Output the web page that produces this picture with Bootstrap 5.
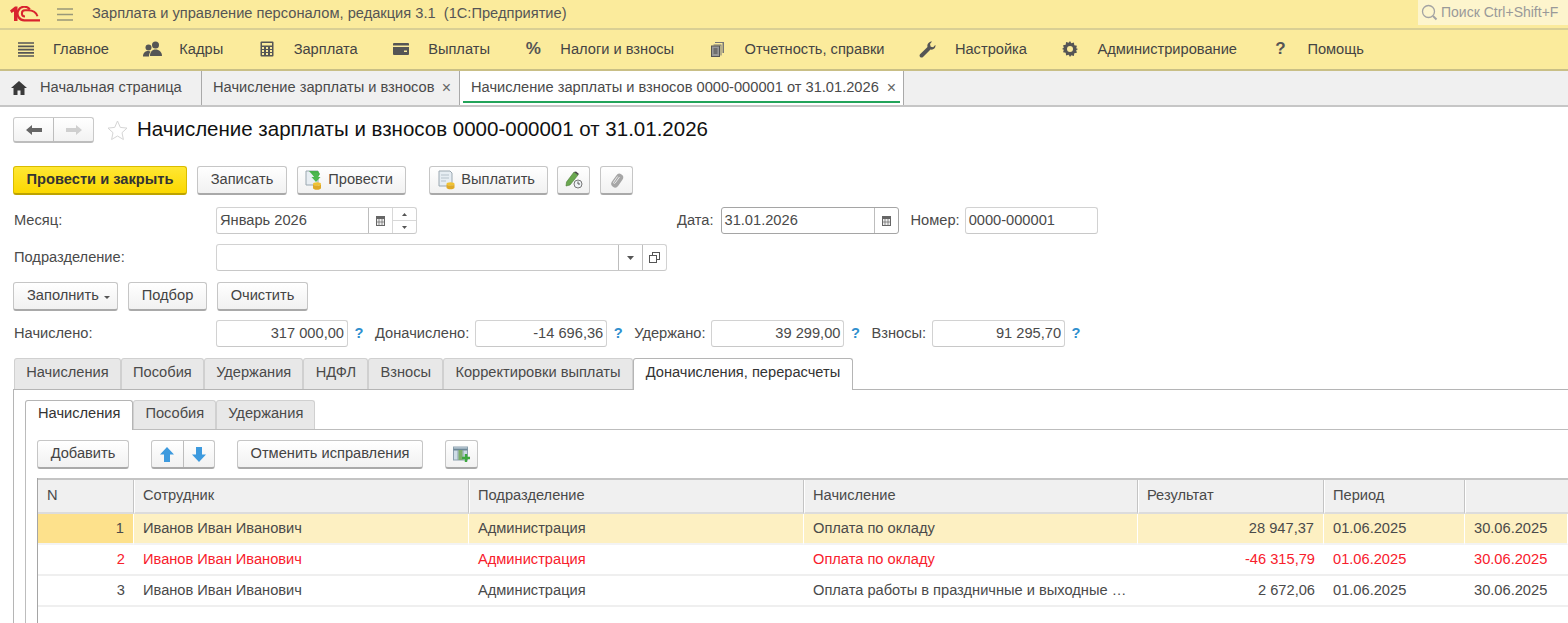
<!DOCTYPE html>
<html lang="ru">
<head>
  <meta charset="UTF-8" />
  <title>Начисление зарплаты и взносов</title>
  <link href="https://cdn.jsdelivr.net/npm/bootstrap@5.3.0/dist/css/bootstrap.min.css" rel="stylesheet" />
  <style>
    html, body { height: 623px; overflow: hidden; }
    body { font-family: "Liberation Sans", Arial, sans-serif; font-size: 14.65px; color: #4a4a4a; background: #fff; }
    svg { display: block; flex: none; }

    /* top yellow bars */
    .top-bar { height: 30px; background: #fbeb9c; border-bottom: 2px solid #d9cf94; }
    .app-logo { margin-left: 10px; margin-top: 0; }
    .burger { margin-left: 17px; margin-right: 19px; }
    .app-title { font-size: 14.65px; color: #555; white-space: pre; }
    .search-box { width: 150px; height: 26px; margin-top: -4px; background: #fdf5cd; color: #999; font-size: 14px; padding-left: 3px; gap: 3px; }
    .sect-bar { height: 41px; background: #fbeb9c; border-bottom: 2px solid #c9bf86; padding-left: 17px; gap: 34.4px; }
    .sect-item { display: flex; align-items: center; gap: 18px; color: #444; white-space: nowrap; }
    .sect-ico { width: 18px; display: flex; justify-content: center; color: #555; }
    .sect-mark { font-weight: 700; font-size: 17px; line-height: 18px; color: #555; }

    /* open windows */
    .win-tabs { height: 36px; background: #f0f0f0; border-bottom: 2px solid #c6c6c6; }
    .win-tab { height: 34px; display: flex; align-items: center; border-right: 1px solid #a9a9a9; color: #4a4a4a; white-space: nowrap; position: relative; }
    .win-home { width: 202px; padding-left: 11px; gap: 13px; }
    .win-doc { width: 258px; padding-left: 11px; justify-content: space-between; padding-right: 8px; }
    .win-cur { width: 444px; padding-left: 11px; padding-right: 7px; justify-content: space-between; background: #fff; }
    .win-cur::after { content: ""; position: absolute; left: 3px; right: 3px; bottom: 2px; height: 2px; background: #23a45a; }
    .win-close { color: #666; font-size: 16px; line-height: 14px; }

    /* form */
    .form-area { padding-left: 13px; }
    .head-row { height: 26px; margin-top: 10px; }
    .nav-pair { width: 81px; height: 26px; border: 1px solid #c9c9c9; border-bottom: 2px solid #bdbdbd; border-radius: 3px; background: linear-gradient(#fff, #f2f2f2); }
    .nav-pair > div { flex: 1; display: flex; align-items: center; justify-content: center; height: 100%; }
    .nav-pair > div:first-child { border-right: 1px solid #bdbdbd; }
    .star-ico { margin-left: 13px; margin-right: 9px; }
    .doc-title { font-size: 20.5px; color: #111; line-height: 26px; white-space: nowrap; margin: 0 0 2px; }

    .btn-1c { height: 29px; padding: 0; display: inline-flex; align-items: center; justify-content: center; gap: 5px; font-size: 14.65px; color: #444; background: linear-gradient(#fff, #f1f1f1); border: 1px solid #c6c6c6; border-bottom: 2px solid #a9a9a9; border-radius: 3px; white-space: nowrap; }
    .btn-main { background: linear-gradient(#ffe733, #fbd800); border-color: #d9bc00; border-bottom-color: #bda300; color: #333; font-weight: 700; }
    .btn-ico-text { justify-content: flex-end; padding-right: 12px; }
    .cmd-row { margin-top: 23px; }
    .w-post-close { width: 174px; margin-right: 10px; }
    .w-save { width: 90px; margin-right: 10px; }
    .w-post { width: 109px; margin-right: 23px; }
    .w-pay { width: 119px; margin-right: 9px; }
    .w-ico { width: 33px; margin-right: 10px; }
    .w-fill { width: 105px; margin-right: 10px; justify-content: flex-start; padding-left: 13px; }
    .w-pick { width: 79px; margin-right: 10px; }
    .w-clear { width: 91px; }
    .w-add { width: 92px; margin-right: 22px; }
    .w-undo { width: 186px; margin-right: 22px; }
    .caret-1c { width: 0; height: 0; border: 3px solid transparent; border-top: 3px solid #555; border-bottom: 0; margin-top: 2px; }

    .fld { height: 27px; border: 1px solid #d2d2d2; border-bottom-color: #c8c8c8; border-radius: 3px; background: #fff; display: flex; align-items: center; color: #4a4a4a; white-space: nowrap; flex: none; }
    .fld-text { flex: 1; padding: 0 5px 0 3px; }
    .fld-btn { width: 24px; height: 100%; display: flex; align-items: center; justify-content: center; border-left: 1px solid #bdbdbd; flex: none; }
    .fld-spin { width: 24px; height: 100%; display: flex; flex-direction: column; border-left: 1px solid #d8d8d8; }
    .fld-spin > div { flex: 1; display: flex; align-items: center; justify-content: center; }
    .fld-spin > div:first-child { border-bottom: 1px solid #d8d8d8; }
    .fld-dark { border-color: #a5a5a5; }
    .fld-num { justify-content: flex-end; padding-right: 3px; }
    .lbl { flex: none; white-space: nowrap; color: #4a4a4a; }
    .lbl-first { width: 202px; margin-left: 1px; }
    .w-month { width: 201px; }
    .lbl-date { margin-left: 260px; margin-right: 7px; }
    .w-date { width: 178px; }
    .lbl-num { margin-left: 12px; margin-right: 5px; }
    .w-num { width: 133px; }
    .w-sub { width: 451px; }
    .w-total { width: 132px; }
    .w-total-b { width: 133px; }
    .hint { color: #2f8fce; font-weight: 700; flex: none; width: 16px; text-align: center; margin-left: 3px; }
    .lbl-extra { margin-left: 8px; margin-right: 6px; }
    .row-month { margin-top: 12px; }
    .row-sub { margin-top: 10px; }
    .row-btns { margin-top: 11px; }
    .row-totals { margin-top: 9px; }

    /* tabs, Bootstrap nav-tabs restyled */
    .tabs-1c { margin-top: 11px; margin-left: 1px; height: 31px; flex-wrap: nowrap; border: 0; }
    .tabs-1c .nav-link { height: 31px; padding: 0 11.2px; line-height: 26px; color: #4a4a4a; background: #e8e8e8; border: 1px solid #d0d0d0; border-bottom: 0; border-radius: 3px 3px 0 0; margin: 0; white-space: nowrap; }
    .tabs-1c .nav-link.active { padding: 0 12px; background: #fff; color: #333; border-color: #b5b5b5; height: 32px; position: relative; z-index: 1; }
    .panel-outer { border-top: 1px solid #b5b5b5; border-left: 1px solid #b5b5b5; padding: 10px 0 0 11px; height: 234px; }
    .tabs-in { margin-top: 0; margin-left: 0; height: 29px; }
    .tabs-in .nav-link { height: 29px; padding: 0 11px; line-height: 24px; }
    .tabs-in .nav-link.active { height: 30px; }
    .panel-inner { border-top: 1px solid #bdbdbd; border-left: 1px solid #bdbdbd; padding: 10px 0 0 11px; height: 194px; }
    .btn-pair { display: inline-flex; width: 64px; height: 29px; margin-right: 22px; border: 1px solid #c6c6c6; border-bottom: 2px solid #a9a9a9; border-radius: 3px; background: linear-gradient(#fff, #f1f1f1); }
    .btn-pair > div { flex: 1; display: flex; align-items: center; justify-content: center; }
    .btn-pair > div:first-child { border-right: 1px solid #bdbdbd; }

    /* grid */
    .grid-box { margin-top: 9px; height: 145px; border-left: 1px solid #a5a5a5; }
    .grid-1c { margin: 0; width: 1530px; table-layout: fixed; border-collapse: separate; border-spacing: 0; border-top: 2px solid #c4c4c4; color: #4a4a4a; }
    .grid-1c th, .grid-1c td { padding: 0 9px; font-weight: 400; white-space: nowrap; overflow: hidden; vertical-align: middle; border: 0; box-shadow: none; }
    .grid-1c th { height: 34px; padding: 0 8px; background: #f0f0f0; border-right: 1px solid #c4c4c4; border-left: 1px solid #fff; border-bottom: 2px solid #dcdcdc; }
    .grid-1c th:first-child { border-left: 0; padding-left: 9px; }
    .grid-1c th:last-child { border-right: 0; }
    .grid-1c td { height: 31px; border-bottom: 2px solid #efefef; background: #fff; }
    .grid-1c .row-cur td { background: #fdf0c2; border-right: 1px solid #fff; border-bottom-color: #f3f3f3; }
    .grid-1c .row-cur td:first-child { background: #fde18c; }
    .grid-1c .row-err td { color: #f8202c; }
    .c-n { width: 96px; }
    .c-emp, .c-dep { width: 335px; }
    .c-acc { width: 334px; }
    .c-res { width: 186px; }
    .c-per { width: 141px; }
  </style>
</head>
<body>

<!-- Заголовок приложения -->
<div class="top-bar d-flex align-items-center">
  <svg class="app-logo" width="30" height="16" viewBox="0 0 30 16"><path d="M0 4.500L5 .5h2.500V15H4V5.500L1.500 7z" fill="#d9232e"/><path d="M19.800 3.500A6.800 6.800 0 1 0 15 14.300H30" fill="none" stroke="#d9232e" stroke-width="2.200"/><path d="M15 10.500a3 3 0 0 1 0-6.200h3c5 0 8 1.500 9.500 6" fill="none" stroke="#d9232e" stroke-width="2"/></svg>
  <svg class="burger" width="16" height="13" viewBox="0 0 16 13"><path d="M0 1h16M0 6.500h16M0 12h16" stroke="#999878" stroke-width="1.600"/></svg>
  <div class="app-title">Зарплата и управление персоналом, редакция 3.1  (1С:Предприятие)</div>
  <div class="search-box d-flex align-items-center ms-auto">
    <svg width="17" height="17" viewBox="0 0 17 17"><circle cx="7.500" cy="7.500" r="6" fill="none" stroke="#a3a3a3" stroke-width="1.300"/><path d="M12 12l3.500 3.500" stroke="#a3a3a3" stroke-width="2"/></svg>
    <span>Поиск Ctrl+Shift+F</span>
  </div>
</div>

<!-- Разделы -->
<nav class="sect-bar d-flex align-items-center">
  <div class="sect-item"><span class="sect-ico"><svg width="16" height="15" viewBox="0 0 16 15"><path d="M0 1h16M0 4.300h16M0 7.600h16M0 10.900h16M0 14h16" stroke="#555" stroke-width="1.700"/></svg></span>Главное</div>
  <div class="sect-item"><span class="sect-ico"><svg width="19" height="16" viewBox="0 0 19 16" fill="#555"><circle cx="12.500" cy="4" r="3.500"/><path d="M7 15c0-4 2-6.500 5.500-6.500S19 11 19 15z"/><circle cx="5.500" cy="6.500" r="3"/><path d="M0 15.500c0-3.500 2-5.500 5.500-5.500 1 0 1.500.2 2 .5-1 1.500-1.500 3-1.500 5z"/></svg></span>Кадры</div>
  <div class="sect-item"><span class="sect-ico"><svg width="14" height="16" viewBox="0 0 14 16"><rect x=".5" y=".5" width="13" height="15" rx="1" fill="#555"/><rect x="2" y="2" width="10" height="2.500" fill="#fbeb9c"/><path d="M2 6h2v2H2zM6 6h2v2H6zM10 6h2v2h-2zM2 9h2v2H2zM6 9h2v2H6zM10 9h2v2h-2zM2 12h2v2H2zM6 12h2v2H6zM10 12h2v2h-2z" fill="#fbeb9c"/></svg></span>Зарплата</div>
  <div class="sect-item"><span class="sect-ico"><svg width="16" height="12" viewBox="0 0 16 12"><rect width="16" height="12" rx="1" fill="#555"/><rect y="2.500" width="16" height="1.500" fill="#fbeb9c"/><rect x="11" y="7.500" width="3" height="1.500" fill="#fbeb9c"/></svg></span>Выплаты</div>
  <div class="sect-item"><span class="sect-ico sect-mark">%</span>Налоги и взносы</div>
  <div class="sect-item"><span class="sect-ico"><svg width="14" height="16" viewBox="0 0 14 16"><path d="M4 2V1h9v11h-1.500V2z" fill="#777"/><path d="M2.500 3.500h8v11h-1V4.500h-7z" fill="#777"/><rect x=".5" y="5" width="8" height="10.500" fill="#999" stroke="#555"/><path d="M2.500 8h4M2.500 10h4M2.500 12h4" stroke="#444"/></svg></span>Отчетность, справки</div>
  <div class="sect-item"><span class="sect-ico"><svg width="17" height="17" viewBox="0 0 17 17"><path d="M16.500 4.500c0 2.800-2.500 4.700-5 4L4 16c-1 1-3 .5-3.300-.7-.3-1 0-1.800.6-2.300L8.500 6c-.8-2.800 1.500-5.500 4.500-5.500l-2 2.500.7 2.700 2.500.5 2-2.300c.2.200.3.400.3.600z" fill="#555"/></svg></span>Настройка</div>
  <div class="sect-item"><span class="sect-ico"><svg width="16" height="16" viewBox="0 0 16 16"><path d="M8 0l1.300 2.300 2.600-.7.400 2.600 2.600.5-.7 2.500L16 8l-1.800 1.300.7 2.500-2.600.5-.4 2.600-2.600-.7L8 16l-1.300-2.300-2.600.7-.4-2.600-2.600-.5.7-2.500L0 8l1.800-1.300-.7-2.500 2.600-.5.4-2.600 2.600.7z" fill="#555"/><circle cx="8" cy="8" r="3" fill="#fbeb9c"/></svg></span>Администрирование</div>
  <div class="sect-item"><span class="sect-ico sect-mark">?</span>Помощь</div>
</nav>

<!-- Открытые окна -->
<div class="win-tabs d-flex">
  <div class="win-tab win-home">
    <svg width="16" height="14" viewBox="0 0 16 14"><path d="M8 0L0 7h2.500v7h4V9.500h3V14h4V7H16z" fill="#3a3a3a"/></svg>
    <span>Начальная страница</span>
  </div>
  <div class="win-tab win-doc"><span>Начисление зарплаты и взносов</span><span class="win-close">×</span></div>
  <div class="win-tab win-cur"><span>Начисление зарплаты и взносов 0000-000001 от 31.01.2026</span><span class="win-close">×</span></div>
</div>

<main class="form-area">
  <div class="head-row d-flex align-items-center">
    <div class="nav-pair d-flex">
      <div><svg width="16" height="10" viewBox="0 0 16 10"><path d="M0 5l6-5v3h10v4H6v3z" fill="#666"/></svg></div>
      <div><svg width="16" height="10" viewBox="0 0 16 10"><path d="M16 5l-6-5v3H0v4h10v3z" fill="#cfcfcf"/></svg></div>
    </div>
    <svg class="star-ico" width="21" height="21" viewBox="0 0 21 21"><path d="M10.500 1l2.800 6.400 6.700.7-5 4.600 1.400 6.800-5.900-3.500-5.900 3.500 1.400-6.800-5-4.600 6.700-.7z" fill="#fff" stroke="#d5d5d5"/></svg>
    <h1 class="doc-title fw-normal">Начисление зарплаты и взносов 0000-000001 от 31.01.2026</h1>
  </div>

  <div class="cmd-row d-flex">
    <button type="button" class="btn btn-1c btn-main w-post-close">Провести и закрыть</button>
    <button type="button" class="btn btn-1c w-save">Записать</button>
    <button type="button" class="btn btn-1c btn-ico-text w-post">
      <svg width="18" height="20" viewBox="0 0 18 20"><path d="M1 1h12v14H1z" fill="#e8eef3" stroke="#9aa7b0"/><path d="M4 1h9l2 3-3.500 5L8 5.500z" fill="#46b04a"/><path d="M8 3h5v4h2.500L11 12 6.500 7H9z" fill="#4cb84f"/><ellipse cx="12" cy="14" rx="4" ry="1.800" fill="#f1c232"/><path d="M8 14v4c0 1 1.800 1.800 4 1.800s4-.8 4-1.800v-4c0 1-1.800 1.800-4 1.800S8 15 8 14z" fill="#dfa926"/></svg>
      Провести</button>
    <button type="button" class="btn btn-1c btn-ico-text w-pay">
      <svg width="18" height="20" viewBox="0 0 18 20"><path d="M1 1h11l2 2v13H1z" fill="#e6edf3" stroke="#9aa7b0"/><path d="M3 5h8M3 8h8M3 11h5" stroke="#b5c1ca"/><ellipse cx="12.500" cy="14" rx="4" ry="1.800" fill="#f1c232"/><path d="M8.500 14v3.500c0 1 1.800 1.800 4 1.800s4-.8 4-1.800V14c0 1-1.800 1.800-4 1.800s-4-.8-4-1.800z" fill="#dfa926"/></svg>
      Выплатить</button>
    <button type="button" class="btn btn-1c w-ico">
      <svg width="19" height="18" viewBox="0 0 19 18"><path d="M10 1l4 3-8 10-4 1 .5-4z" fill="#6aa84f" stroke="#4a7a36" stroke-width=".6"/><path d="M10 1l2-.5 3 2.500-1 1z" fill="#444"/><circle cx="14" cy="13" r="4" fill="#eef2f5" stroke="#777"/><path d="M14 10.500V13h2" stroke="#555" fill="none"/></svg>
    </button>
    <button type="button" class="btn btn-1c w-ico">
      <svg width="16" height="17" viewBox="0 0 16 17"><rect x="4.500" y="1" width="7.500" height="15" rx="3.700" transform="rotate(35 8 8.500)" fill="#a6a6a6"/><path d="M10.500 5L6.200 11c-.8 1-2.200.2-1.500-1L8.500 4.500" fill="none" stroke="#e8e8e8"/></svg>
    </button>
  </div>

  <div class="row-month d-flex align-items-center">
    <span class="lbl lbl-first">Месяц:</span>
    <div class="fld w-month">
      <span class="fld-text">Январь 2026</span>
      <span class="fld-btn"><svg width="11" height="11" viewBox="0 0 11 11"><path d="M1 1h9v10H1z" fill="#666"/><path d="M2 4h7v6H2z" fill="#eee"/><path d="M4 4v6M7 4v6M2 7h7" stroke="#666" stroke-width=".7"/></svg></span>
      <div class="fld-spin">
        <div><svg width="5" height="3" viewBox="0 0 5 3"><path d="M0 3l2.500-3L5 3z" fill="#555"/></svg></div>
        <div><svg width="5" height="3" viewBox="0 0 5 3"><path d="M0 0l2.500 3L5 0z" fill="#555"/></svg></div>
      </div>
    </div>
    <span class="lbl lbl-date">Дата:</span>
    <div class="fld fld-dark w-date">
      <span class="fld-text">31.01.2026</span>
      <span class="fld-btn"><svg width="11" height="11" viewBox="0 0 11 11"><path d="M1 1h9v10H1z" fill="#666"/><path d="M2 4h7v6H2z" fill="#eee"/><path d="M4 4v6M7 4v6M2 7h7" stroke="#666" stroke-width=".7"/></svg></span>
    </div>
    <span class="lbl lbl-num">Номер:</span>
    <div class="fld w-num"><span class="fld-text">0000-000001</span></div>
  </div>

  <div class="row-sub d-flex align-items-center">
    <span class="lbl lbl-first">Подразделение:</span>
    <div class="fld w-sub">
      <span class="fld-text"></span>
      <span class="fld-btn"><svg width="7" height="4" viewBox="0 0 7 4"><path d="M0 0h7L3.500 4z" fill="#555"/></svg></span>
      <span class="fld-btn"><svg width="11" height="11" viewBox="0 0 11 11" fill="#fff" stroke="#555"><rect x="3.500" y=".5" width="7" height="7"/><rect x=".5" y="3.500" width="7" height="7"/></svg></span>
    </div>
  </div>

  <div class="row-btns d-flex">
    <button type="button" class="btn btn-1c w-fill">Заполнить<i class="caret-1c"></i></button>
    <button type="button" class="btn btn-1c w-pick">Подбор</button>
    <button type="button" class="btn btn-1c w-clear">Очистить</button>
  </div>

  <div class="row-totals d-flex align-items-center">
    <span class="lbl lbl-first">Начислено:</span>
    <div class="fld fld-num w-total">317 000,00</div>
    <span class="hint">?</span>
    <span class="lbl lbl-extra">Доначислено:</span>
    <div class="fld fld-num w-total">-14 696,36</div>
    <span class="hint">?</span>
    <span class="lbl lbl-extra">Удержано:</span>
    <div class="fld fld-num w-total-b">39 299,00</div>
    <span class="hint">?</span>
    <span class="lbl lbl-extra">Взносы:</span>
    <div class="fld fld-num w-total-b">91 295,70</div>
    <span class="hint">?</span>
  </div>

  <ul class="nav nav-tabs tabs-1c">
    <li class="nav-item"><a class="nav-link" href="#">Начисления</a></li>
    <li class="nav-item"><a class="nav-link" href="#">Пособия</a></li>
    <li class="nav-item"><a class="nav-link" href="#">Удержания</a></li>
    <li class="nav-item"><a class="nav-link" href="#">НДФЛ</a></li>
    <li class="nav-item"><a class="nav-link" href="#">Взносы</a></li>
    <li class="nav-item"><a class="nav-link" href="#">Корректировки выплаты</a></li>
    <li class="nav-item"><a class="nav-link active" href="#">Доначисления, перерасчеты</a></li>
  </ul>
  <div class="panel-outer">
    <ul class="nav nav-tabs tabs-1c tabs-in">
      <li class="nav-item"><a class="nav-link active" href="#">Начисления</a></li>
      <li class="nav-item"><a class="nav-link" href="#">Пособия</a></li>
      <li class="nav-item"><a class="nav-link" href="#">Удержания</a></li>
    </ul>
    <div class="panel-inner">
      <div class="d-flex">
        <button type="button" class="btn btn-1c w-add">Добавить</button>
        <div class="btn-pair">
          <div><svg width="14" height="15" viewBox="0 0 14 15"><path d="M7 0l7 7.500H10V15H4V7.500H0z" fill="#3d9ade"/></svg></div>
          <div><svg width="14" height="15" viewBox="0 0 14 15"><path d="M7 15L0 7.500h4V0h6v7.500h4z" fill="#3d9ade"/></svg></div>
        </div>
        <button type="button" class="btn btn-1c w-undo">Отменить исправления</button>
        <button type="button" class="btn btn-1c w-ico">
          <svg width="18" height="17" viewBox="0 0 18 17"><rect x=".5" y="1" width="14" height="13" fill="#cfdde6" stroke="#8ba0ae"/><path d="M.5 3.500h14" stroke="#6c8797" stroke-width="2"/><path d="M5 4v10M10 4v10" stroke="#8ba0ae"/><rect x="5.500" y="4" width="4" height="10" fill="#7cae6a"/><path d="M13 8v8M9 12h8" stroke="#3ea83e" stroke-width="2.400"/></svg>
        </button>
      </div>
      <div class="grid-box">
        <table class="table grid-1c">
          <colgroup>
            <col class="c-n"><col class="c-emp"><col class="c-dep"><col class="c-acc"><col class="c-res"><col class="c-per"><col>
          </colgroup>
          <thead>
            <tr><th>N</th><th>Сотрудник</th><th>Подразделение</th><th>Начисление</th><th>Результат</th><th>Период</th><th></th></tr>
          </thead>
          <tbody>
            <tr class="row-cur"><td class="text-end">1</td><td>Иванов Иван Иванович</td><td>Администрация</td><td>Оплата по окладу</td><td class="text-end">28 947,37</td><td>01.06.2025</td><td>30.06.2025</td></tr>
            <tr class="row-err"><td class="text-end">2</td><td>Иванов Иван Иванович</td><td>Администрация</td><td>Оплата по окладу</td><td class="text-end">-46 315,79</td><td>01.06.2025</td><td>30.06.2025</td></tr>
            <tr><td class="text-end">3</td><td>Иванов Иван Иванович</td><td>Администрация</td><td>Оплата работы в праздничные и выходные …</td><td class="text-end">2 672,06</td><td>01.06.2025</td><td>30.06.2025</td></tr>
          </tbody>
        </table>
      </div>
    </div>
  </div>
</main>

<script src="https://cdn.jsdelivr.net/npm/bootstrap@5.3.0/dist/js/bootstrap.bundle.min.js"></script>
</body>
</html>
